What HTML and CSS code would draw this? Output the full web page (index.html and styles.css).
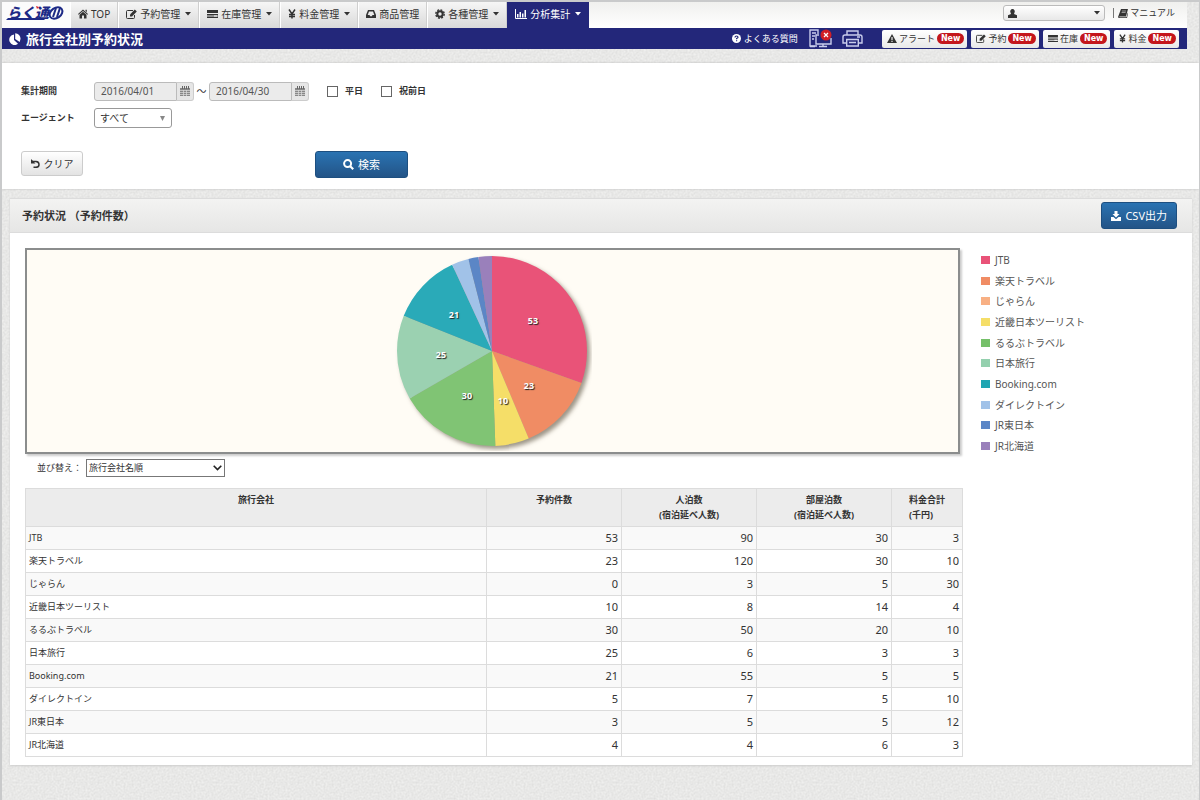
FILE: index.html
```html
<!DOCTYPE html>
<html lang="ja">
<head>
<meta charset="utf-8">
<title>旅行会社別予約状況</title>
<link rel="stylesheet" href="styles.css">
</head>
<body>
<svg class="sprite" aria-hidden="true">
  <symbol id="edit" viewBox="0 0 11 10"><path d="M8.500 6v2.500q0 1-1 1h-6q-1 0-1-1v-6q0-1 1-1H7" fill="none" stroke="currentColor"/><path d="M4 7.500V5.400L8.800.6l2 2L6 7.500z" fill="currentColor"/></symbol>
  <symbol id="stock" viewBox="0 0 11 10"><path d="M0 1h11v3H0zM0 5h11v1.500H0zM0 7.500h11V9H0z" fill="currentColor"/><path d="M7 7h3" stroke="#fff"/></symbol>
  <symbol id="yen" viewBox="0 0 8 10"><path d="M1 .5l3 4.500 3-4.500M4 5v4.500M1 5.500h6M1 7.500h6" fill="none" stroke="currentColor" stroke-width="1.500"/></symbol>
  <symbol id="caret" viewBox="0 0 6 4"><path d="M0 0h6L3 3.500z" fill="currentColor"/></symbol>
  <symbol id="calendar" viewBox="0 0 10 11"><path d="M0 2h10v8H0z" fill="#888"/><path d="M0 4.500h10M0 6.500h10M0 8.500h10M3.500 4v6M6.500 4v6" stroke="#ddd" stroke-width=".7"/><path d="M2.500 0v3M4.500 0v3M6.500 0v3M8.500 0v3" stroke="#666"/></symbol>
</svg>

<header class="header">
  <div class="topbar">
    <a class="logo" href="#" aria-label="らく通">
      <svg width="62" height="24" viewBox="0 0 62 24">
        <text class="logo-text" x="3" y="16">らく通</text>
        <path d="M2 18h38l2-2H4z" fill="#1d2a86"/>
        <path d="M32 4l3 1-2 2z" fill="#e0262c"/>
        <g fill="none" stroke="#1d2a86" stroke-width="2"><ellipse cx="52" cy="11" rx="7" ry="5" transform="rotate(-35 52 11)"/><path d="M49 15l3-9M53 15l3-9"/></g>
      </svg>
    </a>
    <nav class="nav">
      <a class="nav-item" href="#"><svg width="10" height="10" viewBox="0 0 10 10"><path d="M5 .5L10 5l-.6.7L5 2 .6 5.700 0 5zM7.500.8h1.300v2.400L7.500 2zM1.500 5.700L5 2.800l3.500 2.900v3.800H6V6.500H4v3H1.500z" fill="currentColor"/></svg>TOP</a>
      <a class="nav-item" href="#"><svg width="11" height="10"><use href="#edit"/></svg>予約管理<svg class="caret" width="6" height="4"><use href="#caret"/></svg></a>
      <a class="nav-item" href="#"><svg width="11" height="10"><use href="#stock"/></svg>在庫管理<svg class="caret" width="6" height="4"><use href="#caret"/></svg></a>
      <a class="nav-item" href="#"><svg width="8" height="10"><use href="#yen"/></svg>料金管理<svg class="caret" width="6" height="4"><use href="#caret"/></svg></a>
      <a class="nav-item" href="#"><svg width="10" height="10" viewBox="0 0 10 10"><path d="M2 1h6l2 5v3H0V6zM3 2.500L1.700 6h1.800l.7 1.300h1.600L6.500 6h1.800L7 2.500z" fill="currentColor" fill-rule="evenodd"/></svg>商品管理</a>
      <a class="nav-item" href="#"><svg width="10" height="10" viewBox="0 0 10 10"><circle cx="5" cy="5" r="2.700" fill="none" stroke="currentColor" stroke-width="2"/><circle cx="5" cy="5" r="4.200" fill="none" stroke="currentColor" stroke-width="1.400" stroke-dasharray="1.900 1.400"/></svg>各種管理<svg class="caret" width="6" height="4"><use href="#caret"/></svg></a>
      <a class="nav-item nav-item-active" href="#"><svg width="12" height="10" viewBox="0 0 12 10"><path d="M.5 0v9.500H12" fill="none" stroke="currentColor"/><path d="M2 5h1.500v3.500H2zM4.500 3H6v5.500H4.500zM7 4.500h1.500v4H7zM9.500 1H11v7.500H9.500z" fill="currentColor"/></svg>分析集計<svg class="caret" width="6" height="4"><use href="#caret"/></svg></a>
    </nav>
    <div class="account">
      <button class="user-menu" type="button" aria-label="ユーザー"><svg width="9" height="9" viewBox="0 0 9 9"><path d="M4.500 0a2.200 2.400 0 0 1 2 3.500L6 5l3 1.300V9H0V6.300L3 5l-.5-1.500a2.200 2.400 0 0 1 2-3.500z" fill="currentColor"/></svg><svg width="6" height="4"><use href="#caret"/></svg></button>
      <span class="divider"></span>
      <a class="manual" href="#"><svg width="10" height="9" viewBox="0 0 10 9"><path d="M3 0h7L8 7.500H1.500q-.5.800.3.800H8.500L9.700 3.500l.3 1L9 9H1Q-.3 8.500.4 7z" fill="currentColor"/><path d="M4 2h4M3.600 3.500h4" stroke="#ddd" stroke-width=".6"/></svg>マニュアル</a>
    </div>
  </div>
  <div class="titlebar">
    <svg width="12" height="12" viewBox="0 0 12 12"><path d="M5 1.500V7l4 3.800A5.300 5.300 0 1 1 5 1.500zM6.200.3A5.300 5.300 0 0 1 11.500 6l-.8 3L6.200 6z" fill="#fff"/></svg>
    <h1 class="title">旅行会社別予約状況</h1>
    <a class="faq" href="#"><svg width="9" height="9" viewBox="0 0 9 9"><circle cx="4.500" cy="4.500" r="4.500" fill="#fff"/><path d="M3 3.500Q3 2 4.500 2T6 3.300Q6 4 4.600 4.500v.8M4.600 6.200v1" fill="none" stroke="#23277a" stroke-width="1.200"/></svg>よくある質問</a>
    <button class="icon-button" type="button" aria-label="接続状況"><svg width="24" height="19" viewBox="0 0 24 19"><g fill="none" stroke="#c9cdec" stroke-width="1.400"><path d="M8 17H1V1h8v4M3 4h4M3 7h3M3 10h2"/><path d="M10 6H7v9h15V9M14 15v2.500M10 17.500h8M1 17.500h5"/></g><circle cx="17" cy="6" r="5.500" fill="#d11f26"/><path d="M15 4l4 4M19 4l-4 4" stroke="#fff" stroke-width="1.200"/></svg></button>
    <button class="icon-button" type="button" aria-label="印刷"><svg width="21" height="17" viewBox="0 0 21 17"><g fill="none" stroke="#c9cdec" stroke-width="1.400"><path d="M5 5V1h11v4M4 13H1V7q0-2 2-2h15q2 0 2 2v6h-3"/><path d="M4.700 9.500h11.600v6.500H4.700zM7 12.500h7M15 7h3"/></g></svg></button>
    <div class="shortcuts">
      <a class="shortcut" href="#"><svg width="10" height="9" viewBox="0 0 10 9"><path d="M5 0l5 9H0z" fill="currentColor"/><path d="M5 3v3M5 6.800v1.200" stroke="#fff" stroke-width="1.100"/></svg>アラート<span class="badge">New</span></a>
      <a class="shortcut" href="#"><svg width="10" height="9"><use href="#edit"/></svg>予約<span class="badge">New</span></a>
      <a class="shortcut" href="#"><svg width="10" height="9"><use href="#stock"/></svg>在庫<span class="badge">New</span></a>
      <a class="shortcut" href="#"><svg width="7" height="9"><use href="#yen"/></svg>料金<span class="badge">New</span></a>
    </div>
  </div>
</header>

<form class="filter">
  <div class="filter-row">
    <label class="filter-label" for="from">集計期間</label>
    <span class="date"><input class="date-input" id="from" type="text" value="2016/04/01"><button class="date-button" type="button" aria-label="開始日"><svg width="10" height="11"><use href="#calendar"/></svg></button></span>
    <span class="tilde">～</span>
    <span class="date"><input class="date-input" type="text" value="2016/04/30" aria-label="終了日"><button class="date-button" type="button" aria-label="終了日を選択"><svg width="10" height="11"><use href="#calendar"/></svg></button></span>
    <label class="check"><input class="check-box" type="checkbox">平日</label>
    <label class="check"><input class="check-box" type="checkbox">祝前日</label>
  </div>
  <div class="filter-row">
    <label class="filter-label" for="agent">エージェント</label>
    <span class="agent"><select class="agent-select" id="agent"><option>すべて</option></select><svg class="agent-caret" width="5" height="5" viewBox="0 0 6 6"><path d="M0 0h6L3 6z" fill="currentColor"/></svg></span>
  </div>
  <div class="filter-actions">
    <button class="button button-light" type="reset"><svg width="9" height="9" viewBox="0 0 9 9"><path d="M1 2.500h4q3 .3 3 3T5 8.300H2.500" fill="none" stroke="currentColor" stroke-width="1.500"/><path d="M0 0v4.500h4.500z" fill="currentColor"/></svg>クリア</button>
    <button class="button button-blue button-search" type="button"><svg width="11" height="11" viewBox="0 0 11 11"><circle cx="4.600" cy="4.600" r="3.500" fill="none" stroke="currentColor" stroke-width="2"/><path d="M7.200 7.200l3 3" stroke="currentColor" stroke-width="2.200"/></svg>検索</button>
  </div>
</form>

<main class="panel">
  <div class="panel-head">
    <h2 class="panel-title">予約状況 （予約件数）</h2>
    <button class="button button-blue" type="button"><svg width="10" height="10" viewBox="0 0 10 10"><path d="M3.500 0h3v3h2L5 6.500 1.500 3h2zM0 6h2.500L5 8.200 7.500 6H10v4H0z" fill="currentColor"/></svg>CSV出力</button>
  </div>
  <div class="panel-body">
    <div class="chart">
      <svg class="pie" width="200" height="200" viewBox="-100 -100 200 200" role="img" aria-label="予約件数の円グラフ">
        <g class="pie-shadow">
          <g class="slices" transform="rotate(-90)">
            <circle r="47.500" pathLength="174" stroke="#e95378" stroke-dasharray="53 174"/>
            <circle r="47.500" pathLength="174" stroke="#f08c64" stroke-dasharray="23 174" stroke-dashoffset="-53"/>
            <circle r="47.500" pathLength="174" stroke="#f5de68" stroke-dasharray="10 174" stroke-dashoffset="-76"/>
            <circle r="47.500" pathLength="174" stroke="#80c474" stroke-dasharray="30 174" stroke-dashoffset="-86"/>
            <circle r="47.500" pathLength="174" stroke="#9bd1b1" stroke-dasharray="25 174" stroke-dashoffset="-116"/>
            <circle r="47.500" pathLength="174" stroke="#2aaab8" stroke-dasharray="21 174" stroke-dashoffset="-141"/>
            <circle r="47.500" pathLength="174" stroke="#a1c2e8" stroke-dasharray="5 174" stroke-dashoffset="-162"/>
            <circle r="47.500" pathLength="174" stroke="#5b86c6" stroke-dasharray="3 174" stroke-dashoffset="-167"/>
            <circle r="47.500" pathLength="174" stroke="#9a80bb" stroke-dasharray="4 174" stroke-dashoffset="-170"/>
          </g>
        </g>
        <g class="pie-labels">
          <text x="41" y="-27">53</text><text x="37" y="38">23</text><text x="11" y="53">10</text>
          <text x="-25" y="48">30</text><text x="-51" y="7">25</text><text x="-38" y="-33">21</text>
        </g>
      </svg>
    </div>
    <ul class="legend">
      <li class="legend-item"><span class="swatch c1"></span>JTB</li>
      <li class="legend-item"><span class="swatch c2"></span>楽天トラベル</li>
      <li class="legend-item"><span class="swatch c3"></span>じゃらん</li>
      <li class="legend-item"><span class="swatch c4"></span>近畿日本ツーリスト</li>
      <li class="legend-item"><span class="swatch c5"></span>るるぶトラベル</li>
      <li class="legend-item"><span class="swatch c6"></span>日本旅行</li>
      <li class="legend-item"><span class="swatch c7"></span>Booking.com</li>
      <li class="legend-item"><span class="swatch c8"></span>ダイレクトイン</li>
      <li class="legend-item"><span class="swatch c9"></span>JR東日本</li>
      <li class="legend-item"><span class="swatch c10"></span>JR北海道</li>
    </ul>
    <div class="results">
      <div class="sort">
        <label for="sort">並び替え：</label>
        <span class="sort-box"><select class="sort-select" id="sort"><option>旅行会社名順</option></select><svg class="sort-caret" width="9" height="6" viewBox="0 0 9 6"><path d="M.7.7l3.800 3.800L8.300.7" fill="none" stroke="#222" stroke-width="1.600"/></svg></span>
      </div>
      <table class="table">
        <colgroup><col><col class="col-number"><col class="col-number"><col class="col-number"><col class="col-total"></colgroup>
        <thead><tr><th>旅行会社</th><th>予約件数</th><th>人泊数<br>(宿泊延べ人数)</th><th>部屋泊数<br>(宿泊延べ人数)</th><th><span class="total-label">料金合計<br>(千円)</span></th></tr></thead>
        <tbody>
          <tr><td>JTB</td><td>53</td><td>90</td><td>30</td><td>3</td></tr>
          <tr><td>楽天トラベル</td><td>23</td><td>120</td><td>30</td><td>10</td></tr>
          <tr><td>じゃらん</td><td>0</td><td>3</td><td>5</td><td>30</td></tr>
          <tr><td>近畿日本ツーリスト</td><td>10</td><td>8</td><td>14</td><td>4</td></tr>
          <tr><td>るるぶトラベル</td><td>30</td><td>50</td><td>20</td><td>10</td></tr>
          <tr><td>日本旅行</td><td>25</td><td>6</td><td>3</td><td>3</td></tr>
          <tr><td>Booking.com</td><td>21</td><td>55</td><td>5</td><td>5</td></tr>
          <tr><td>ダイレクトイン</td><td>5</td><td>7</td><td>5</td><td>10</td></tr>
          <tr><td>JR東日本</td><td>3</td><td>5</td><td>5</td><td>12</td></tr>
          <tr><td>JR北海道</td><td>4</td><td>4</td><td>6</td><td>3</td></tr>
        </tbody>
      </table>
    </div>
  </div>
</main>
</body>
</html>
```
FILE: styles.css
```css
* { box-sizing: border-box; }

body {
  margin: 0;
  min-height: 100vh;
  border: solid #c9cacb;
  border-width: 2px 1px 0 2px;
  background: #e6e6e5 url("data:image/svg+xml,%3Csvg xmlns='http://www.w3.org/2000/svg' width='200' height='200'%3E%3Cfilter id='n' x='0' y='0' width='100%25' height='100%25' color-interpolation-filters='sRGB'%3E%3CfeTurbulence type='fractalNoise' baseFrequency='.5' numOctaves='2' stitchTiles='stitch'/%3E%3CfeColorMatrix values='.1 0 0 0 .86 .1 0 0 0 .86 .1 0 0 0 .855 0 0 0 0 1'/%3E%3C/filter%3E%3Crect width='200' height='200' filter='url(%23n)'/%3E%3C/svg%3E");
  color: #333;
  font: 10px/14px "Noto Sans", "Noto Sans CJK JP", sans-serif;
}

button, input, select { font: inherit; color: inherit; margin: 0; }
a { color: inherit; text-decoration: none; }
svg { flex: none; }
h1, h2, ul { margin: 0; padding: 0; }
.sprite { position: absolute; width: 0; height: 0; }

.header { margin-right: 12px; }
.topbar {
  display: flex;
  height: 26px;
  background: linear-gradient(#f0f0ee, #fff);
}
.logo { width: 68px; padding: 0 2px; background: #fbfbfb; }
.logo-text { font: italic 900 14px "Noto Sans CJK JP", sans-serif; fill: #1d2a86; }
.nav { display: flex; }
.nav-item {
  display: flex;
  align-items: center;
  gap: 3px;
  padding: 0 7px 2px;
  border-left: 1px solid #fff;
  border-right: 1px solid #cfcfcf;
  background: linear-gradient(#f6f6f6, #d9d9d9);
}
.nav-item-active { background: #23277a; border-color: #23277a; color: #fff; }
.caret { margin-left: 2px; }
.account { display: flex; align-items: center; margin-left: auto; padding: 0 12px 4px 0; }
.user-menu {
  display: flex;
  align-items: center;
  justify-content: space-between;
  width: 102px;
  height: 16px;
  padding: 0 4px;
  border: 1px solid #bbb;
  border-radius: 3px;
  background: linear-gradient(#fff, #e8e8e8);
}
.divider { width: 1px; height: 10px; margin: 0 4px 0 8px; background: #777; }
.manual { display: flex; align-items: center; gap: 2px; font-size: 9px; }

.titlebar {
  display: flex;
  align-items: center;
  height: 21px;
  padding: 0 8px 0 7px;
  background: #23277a;
  color: #fff;
}
.title { margin-left: 5px; font-size: 13px; line-height: 18px; }
.faq { display: flex; align-items: center; gap: 3px; margin-left: auto; margin-right: 2px; font-size: 9px; }
.icon-button { display: flex; margin-left: 9px; padding: 0; border: 0; background: none; }
.shortcuts { display: flex; gap: 4px; margin-left: 19px; }
.shortcut {
  display: flex;
  align-items: center;
  gap: 2px;
  height: 18px;
  padding: 0 3px 0 5px;
  border-radius: 2px;
  background: linear-gradient(#fff, #e8e8e8);
  color: #333;
  font-size: 9px;
}
.badge {
  padding: 0 4px;
  border-radius: 6px;
  background: #c4161c;
  color: #fff;
  font: bold 8px/11px "DejaVu Sans", sans-serif;
}

.filter {
  margin-top: 14px;
  padding: 18px 19px 11px;
  background: #fff;
  box-shadow: 0 0 2px #bbb;
}
.filter-row { display: flex; align-items: center; height: 20px; margin-bottom: 7px; }
.filter-label { width: 73px; font-size: 9px; font-weight: bold; }
.date { display: flex; height: 19px; }
.date-input {
  width: 83px;
  padding: 0 6px;
  border: 1px solid #bbb;
  border-radius: 3px 0 0 3px;
  background: #ebebeb;
  color: #555;
}
.date-button {
  display: flex;
  align-items: center;
  justify-content: center;
  width: 17px;
  padding: 0;
  border: 1px solid #ccc;
  border-left: 0;
  border-radius: 0 3px 3px 0;
  background: #e6e6e6;
}
.tilde { width: 15px; text-align: center; }
.check { display: flex; align-items: center; gap: 7px; margin-left: 18px; font-size: 9px; font-weight: bold; }
.check-box { appearance: none; width: 11px; height: 11px; border: 1px solid #666; background: #fff; }
.agent, .sort-box { position: relative; display: flex; }
.agent-select {
  appearance: none;
  width: 78px;
  height: 20px;
  padding: 0 5px;
  border: 1px solid #999;
  border-radius: 3px;
  background: #fff;
}
.agent-caret { position: absolute; top: 8px; right: 7px; color: #888; }
.filter-actions { display: flex; align-items: flex-start; margin-top: 23px; }

.button {
  display: flex;
  align-items: center;
  justify-content: center;
  gap: 4px;
  border: 1px solid;
  border-radius: 3px;
  padding: 0 9px;
  white-space: nowrap;
}
.button-light {
  width: 62px;
  height: 25px;
  border-color: #ccc;
  background: linear-gradient(#fff, #e3e3e3);
}
.button-blue {
  height: 27px;
  border-color: #1d4f80;
  background: linear-gradient(#2a73b2, #235487);
  color: #fff;
  font-size: 11px;
}
.button-search { width: 93px; margin-left: 232px; }

.panel {
  margin: 9px 7px 0 8px;
  background: #fff;
  box-shadow: 0 1px 2px #ccc;
}
.panel-head {
  display: flex;
  align-items: center;
  justify-content: space-between;
  height: 35px;
  padding: 0 15px 0 12px;
  border: solid #dcdcdc;
  border-width: 1px 0;
  background: linear-gradient(#f3f3f2, #e6e6e5);
}
.panel-title { font-size: 11px; line-height: 16px; }
.panel-body {
  display: grid;
  grid-template-columns: 1fr 196px;
  column-gap: 18px;
  padding: 15px 15px 8px;
}
.chart {
  display: flex;
  justify-content: center;
  margin-right: 3px;
  padding: 1px 1px 1px 0;
  border: 2px solid #8b8d8d;
  background: #fffcf5;
  box-shadow: 2px 2px 2px #ccc;
}
.pie-shadow { filter: drop-shadow(3px 3px 2px rgba(60, 50, 30, .5)); }
.slices { fill: none; stroke-width: 95; }
.pie-labels {
  fill: #fff;
  font: bold 9px "Noto Sans", sans-serif;
  text-anchor: middle;
  text-shadow: 1px 1px 1px #222;
}
.legend {
  display: flex;
  flex-direction: column;
  justify-content: space-between;
  padding: 5px 0 1px;
  list-style: none;
}
.legend-item { display: flex; align-items: center; gap: 5px; color: #555; }
.swatch { width: 9px; height: 8px; }
.c1 { background: #e95378; }
.c2 { background: #f08c64; }
.c3 { background: #f8b084; }
.c4 { background: #f5de68; }
.c5 { background: #75c069; }
.c6 { background: #94d0ae; }
.c7 { background: #1fa5b2; }
.c8 { background: #a1c2e8; }
.c9 { background: #5b86c6; }
.c10 { background: #9a80bb; }

.sort { display: flex; align-items: center; gap: 4px; padding: 5px 0 11px 12px; font-size: 9px; }
.sort-select {
  appearance: none;
  width: 139px;
  height: 18px;
  padding: 0 2px;
  border: 1px solid #777;
  border-radius: 0;
  background: #fff;
}
.sort-caret { position: absolute; top: 6px; right: 3px; }

.table { width: 100%; border-collapse: collapse; table-layout: fixed; }
.col-number { width: 135px; }
.col-total { width: 71px; }
.table th, .table td { border: 1px solid #dcdcdc; }
.table th {
  height: 38px;
  padding: 3px 4px 4px;
  background: #ececec;
  font-size: 9px;
  line-height: 15px;
  vertical-align: top;
}
.total-label { display: inline-block; text-align: left; }
.table td { height: 23px; padding: 0 3px; font-size: 11px; text-align: right; }
.table td:first-child { font-size: 9px; text-align: left; }
.table tbody tr:nth-child(odd) { background: #f9f9f9; }
```
